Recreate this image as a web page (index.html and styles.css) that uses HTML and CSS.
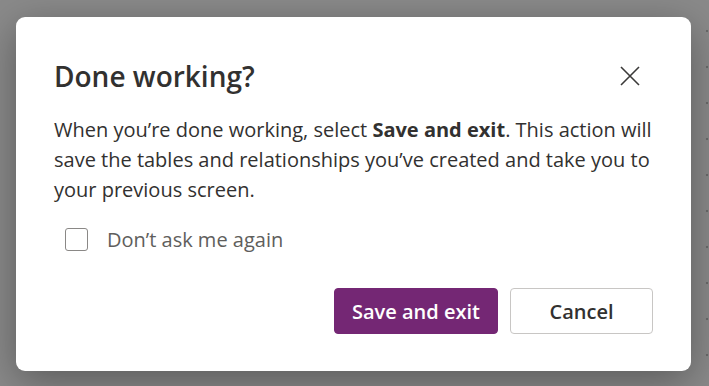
FILE: index.html
```html
<!DOCTYPE html>
<html lang="en">
<head>
  <meta charset="UTF-8" />
  <title>Done working?</title>
  <link rel="stylesheet" href="styles.css">
</head>
<body>

<div class="dialog">
  <div class="dialog-head">
    <h1>Done working?</h1>
    <button class="close" aria-label="Close">
      <svg width="20" height="20" viewBox="0 0 20 20">
        <path d="M1 1 L19 19 M19 1 L1 19" stroke="#3b3a39" stroke-width="1.6" fill="none"/>
      </svg>
    </button>
  </div>

  <p class="message">When you’re done working, select <strong>Save and exit</strong>. This action will save the tables and relationships you’ve created and take you to your previous screen.</p>

  <label class="check">
    <span class="box"></span>
    <span>Don’t ask me again</span>
  </label>

  <div class="actions">
    <button class="btn primary">Save and exit</button>
    <button class="btn">Cancel</button>
  </div>
</div>

</body>
</html>
```

FILE: styles.css
```css
body {
  margin: 0;
  height: 386px;
  padding: 17px 0 0 16px;
  box-sizing: border-box;
  font-family: "Open Sans", sans-serif;
  background-color: #8a8a8a;
  background-image: radial-gradient(circle, #6a6a6a 1px, transparent 1.6px);
  background-size: 4px 36px;
  background-position: 705px 13px;
  background-repeat: repeat-y;
  overflow: hidden;
}
.dialog {
  width: 675px;
  height: 354px;
  box-sizing: border-box;
  padding: 39px 38px 0 38px;
  background: #fff;
  border-radius: 9px;
  box-shadow: 0 10px 40px rgba(0, 0, 0, 0.35);
  color: #323130;
  display: flex;
  flex-direction: column;
}
.dialog-head {
  display: flex;
  justify-content: space-between;
  align-items: center;
}
h1 {
  margin: 0;
  font-size: 28px;
  font-weight: 600;
  line-height: 38px;
}
.close {
  width: 40px;
  height: 40px;
  margin-right: 3px;
  border: 0;
  padding: 0;
  background: none;
  display: flex;
  align-items: center;
  justify-content: center;
}
.message {
  margin: 19px 0 0 0;
  font-size: 20px;
  line-height: 30px;
}
.message strong {
  font-weight: 700;
}
.check {
  display: flex;
  align-items: center;
  gap: 19px;
  margin: 21px 0 0 11px;
  font-size: 20px;
  color: #605e5c;
}
.box {
  width: 21px;
  height: 21px;
  border: 1px solid #8a8886;
  border-radius: 3px;
}
.actions {
  display: flex;
  justify-content: flex-end;
  gap: 12px;
  margin-top: 35px;
}
.btn {
  height: 46px;
  padding: 0;
  width: 143px;
  border: 1px solid #c8c6c4;
  border-radius: 4px;
  background: #fff;
  color: #323130;
  font-family: inherit;
  font-size: 20px;
  font-weight: 600;
}
.btn.primary {
  width: 164px;
  border-color: #742774;
  background: #742774;
  color: #fff;
}
```
